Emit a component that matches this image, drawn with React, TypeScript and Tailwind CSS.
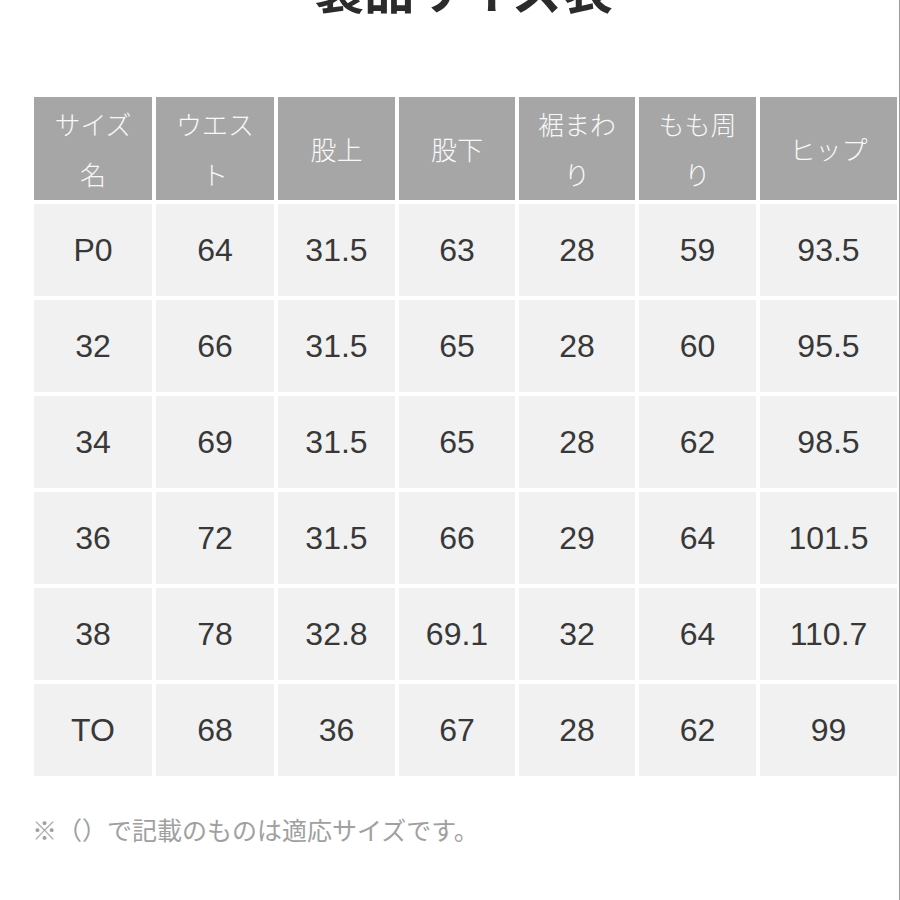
import React from 'react';

const headers = ['サイズ名', 'ウエスト', '股上', '股下', '裾まわり', 'もも周り', 'ヒップ'];

const rows: string[][] = [
  ['P0', '64', '31.5', '63', '28', '59', '93.5'],
  ['32', '66', '31.5', '65', '28', '60', '95.5'],
  ['34', '69', '31.5', '65', '28', '62', '98.5'],
  ['36', '72', '31.5', '66', '29', '64', '101.5'],
  ['38', '78', '32.8', '69.1', '32', '64', '110.7'],
  ['TO', '68', '36', '67', '28', '62', '99'],
];

export default function App() {
  return (
    <div className="w-[900px] h-[900px] overflow-hidden bg-white border-r border-[#9c9c9c] font-['Noto_Sans_CJK_JP',sans-serif]">
      {/* title is scrolled mostly out of view in the screenshot */}
      <div className="mt-[-38px] h-[50px] pl-[28px] text-center text-[50px] leading-[50px] font-bold text-[#2b2b2b]">
        製品サイズ表
      </div>

      <div className="mt-[85px] ml-[34px] grid grid-cols-[118px_118px_117px_116px_116px_117px_137px] grid-rows-[103px_repeat(6,92px)] gap-[4px]">
        {headers.map((h) => (
          <div
            key={h}
            className="flex items-center justify-center bg-[#a6a6a6] px-[10px] text-center text-[26px] leading-[50px] font-light text-[#f8f8f8]"
          >
            {h}
          </div>
        ))}
        {rows.map((r, i) =>
          r.map((v, j) => (
            <div
              key={`${i}-${j}`}
              className="flex items-center justify-center bg-[#f1f1f1] font-['Liberation_Sans','Noto_Sans_CJK_JP',sans-serif] text-[32px] text-[#383838]"
            >
              {v}
            </div>
          ))
        )}
      </div>

      <p className="mt-[35px] ml-[32px] text-[25px] leading-[36px] text-[#a0a0a0]">
        ※（）で記載のものは適応サイズです。
      </p>
    </div>
  );
}
